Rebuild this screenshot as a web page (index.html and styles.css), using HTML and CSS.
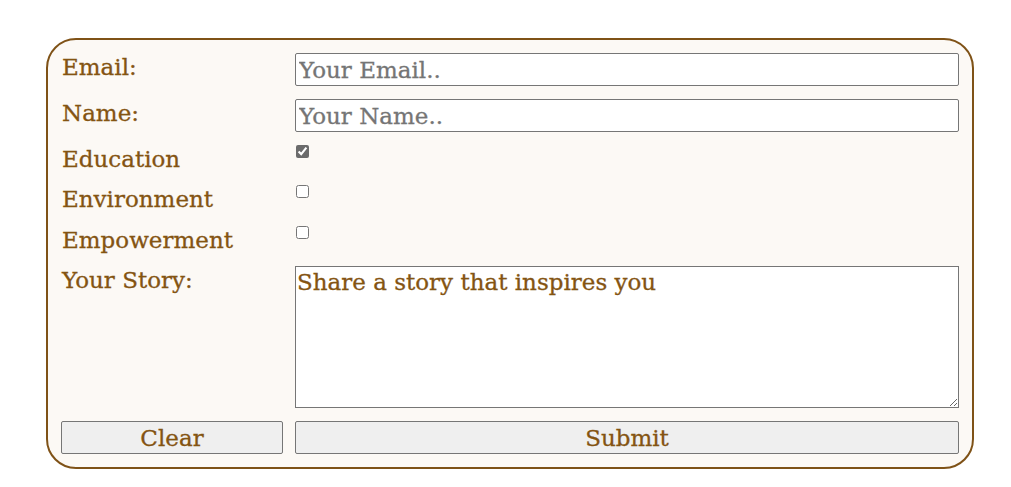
FILE: index.html
```html
<!DOCTYPE html>
<html lang="en">
<head>
<meta charset="utf-8">
<title>Share your story</title>
<link rel="stylesheet" href="styles.css">
</head>
<body>
<form class="story-form">
  <label class="field-label" for="email">Email:</label>
  <input class="text-input" id="email" type="email" placeholder="Your Email..">
  <label class="field-label" for="name">Name:</label>
  <input class="text-input" id="name" type="text" placeholder="Your Name..">
  <label class="field-label" for="edu">Education</label>
  <div class="check-cell"><input class="check" id="edu" type="checkbox" checked></div>
  <label class="field-label" for="env">Environment</label>
  <div class="check-cell"><input class="check" id="env" type="checkbox"></div>
  <label class="field-label" for="emp">Empowerment</label>
  <div class="check-cell"><input class="check" id="emp" type="checkbox"></div>
  <label class="field-label" for="story">Your Story:</label>
  <textarea class="story-input" id="story">Share a story that inspires you</textarea>
  <button class="btn" type="reset">Clear</button>
  <button class="btn" type="submit">Submit</button>
</form>
</body>
</html>
```
FILE: styles.css
```css
html, body {
  margin: 0;
  padding: 0;
  background: #ffffff;
}

.story-form {
  box-sizing: border-box;
  width: 928px;
  margin: 38px 0 0 46px;
  padding: 13px;
  border: 2px solid #7f5217;
  border-radius: 30px;
  background: #fcf9f5;
  display: grid;
  grid-template-columns: 222px 664px;
  column-gap: 12px;
  row-gap: 13px;
  font-family: "DejaVu Serif", serif;
  font-size: 23px;
  color: #845412;
  -webkit-text-stroke: 0.3px currentColor;
}

.field-label {
  line-height: 27.4px;
  padding-left: 1px;
  padding-top: 1px;
  height: 27.4px;
  box-sizing: border-box;
}

.text-input {
  box-sizing: border-box;
  height: 33px;
  margin: 0;
  padding: 1px 3px;
  border: 1px solid #767676;
  border-radius: 2px;
  background: #ffffff;
  font: inherit;
  color: #845412;
}

.text-input::placeholder {
  color: #757575;
}

.check-cell {
  height: 27.4px;
}

.check {
  display: block;
  width: 13px;
  height: 13px;
  margin: 0 0 0 1px;
  accent-color: #6b6b6b;
}

.story-input {
  box-sizing: border-box;
  height: 142px;
  margin: 0;
  padding: 2px 1px;
  border: 1px solid #767676;
  background: #ffffff;
  font: inherit;
  color: #845412;
  resize: both;
}

.btn {
  box-sizing: border-box;
  height: 33px;
  margin: 0;
  padding: 0;
  border: 1px solid #767676;
  border-radius: 2px;
  background: #efefef;
  font: inherit;
  color: #845412;
}
```
